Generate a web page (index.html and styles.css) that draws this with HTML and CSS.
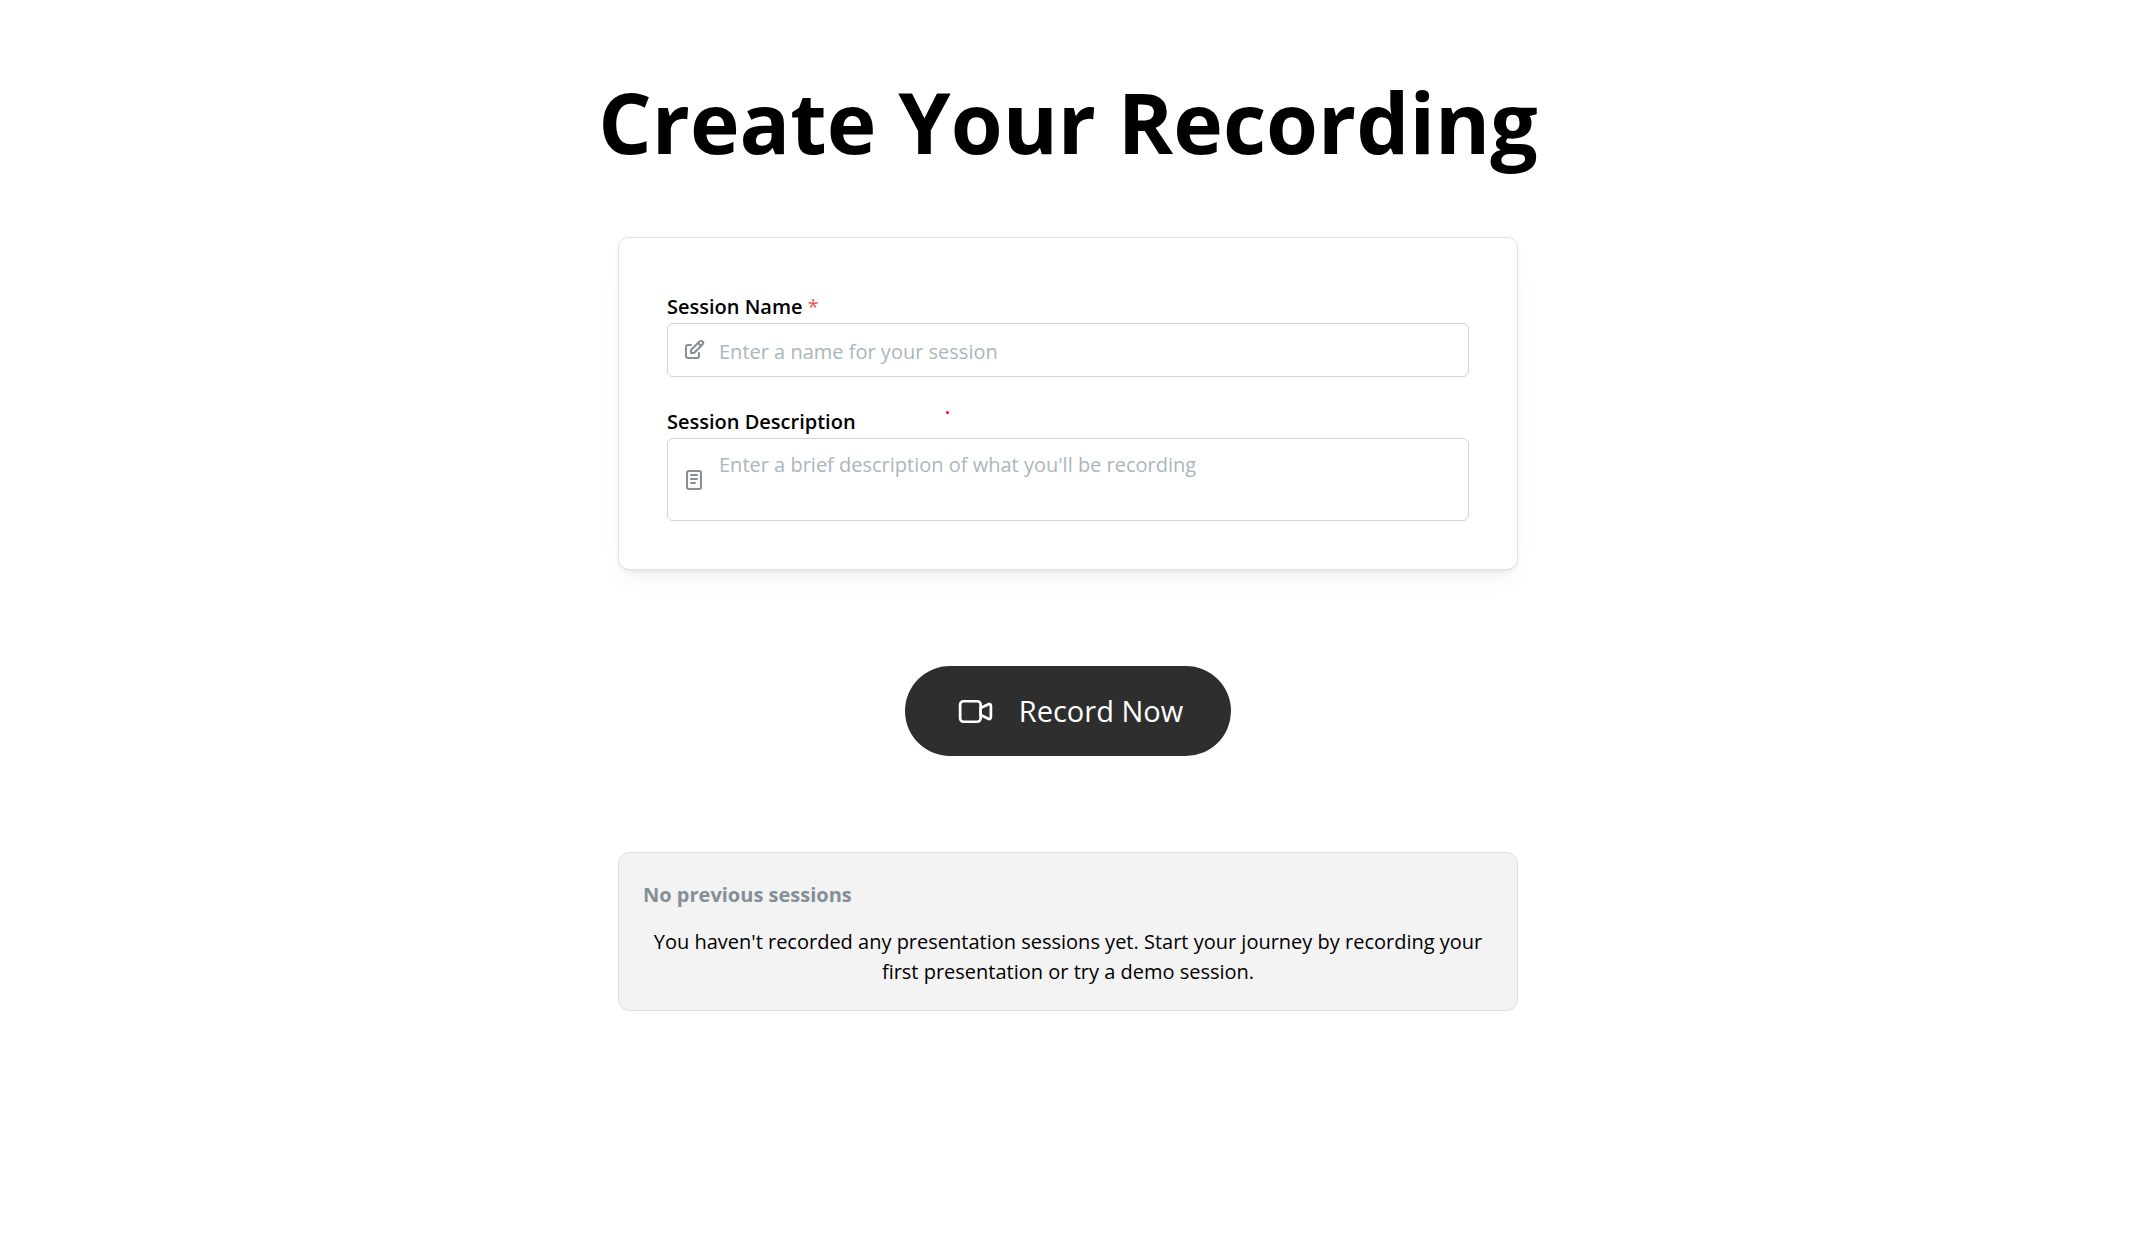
FILE: index.html
```html
<!DOCTYPE html>
<html lang="en">
<head>
  <meta charset="utf-8">
  <meta name="viewport" content="width=device-width, initial-scale=1">
  <title>Create Your Recording</title>
  <link rel="stylesheet" href="styles.css">
</head>
<body>
  <main class="page">
    <h1 class="page-title">Create Your Recording</h1>

    <form class="card" id="session-form">
      <div class="field">
        <label class="field-label" for="session-name">Session Name <span class="required">*</span></label>
        <div class="control">
          <svg class="control-icon" viewBox="0 0 24 24" aria-hidden="true">
            <path d="M9 7H6a2 2 0 0 0-2 2v9a2 2 0 0 0 2 2h9a2 2 0 0 0 2-2v-3"/>
            <path d="M9 15h3l8.5-8.5a1.5 1.5 0 0 0-3-3L9 12v3"/>
            <path d="M16 5l3 3"/>
          </svg>
          <input class="text-input" id="session-name" type="text" placeholder="Enter a name for your session">
        </div>
      </div>

      <div class="field">
        <label class="field-label" for="session-description">Session Description</label>
        <span class="marker" aria-hidden="true"></span>
        <div class="control">
          <svg class="control-icon" viewBox="0 0 24 24" aria-hidden="true">
            <rect x="5" y="3" width="14" height="18" rx="2"/>
            <path d="M9 7h6M9 11h6M9 15h4"/>
          </svg>
          <textarea class="text-input text-area" id="session-description" placeholder="Enter a brief description of what you'll be recording"></textarea>
        </div>
      </div>
    </form>

    <button class="record-button" type="submit" form="session-form">
      <svg class="record-icon" viewBox="0 0 24 24" aria-hidden="true">
        <path d="M15 10l4.553-2.276A1 1 0 0 1 21 8.618v6.764a1 1 0 0 1-1.447.894L15 14v-4z"/>
        <rect x="3" y="6" width="12" height="12" rx="2"/>
      </svg>
      Record Now
    </button>

    <section class="notice">
      <h2 class="notice-title">No previous sessions</h2>
      <p class="notice-text">You haven't recorded any presentation sessions yet. Start your journey by recording your first presentation or try a demo session.</p>
    </section>
  </main>
</body>
</html>
```
FILE: styles.css
```css
* {
  box-sizing: border-box;
}

body {
  margin: 0;
  background: #fff;
  color: #000;
  font-family: "Segoe UI", "Open Sans", "Noto Sans", sans-serif;
  font-size: 20px;
  line-height: 30px;
}

.page {
  display: flex;
  flex-direction: column;
  align-items: center;
  gap: 96px;
  padding: 65px 19px 96px 16px;
}

.page-title {
  margin: 0 0 -38px;
  font-size: 84px;
  font-weight: 700;
  line-height: 114px;
  text-align: center;
}

.card,
.notice {
  width: 100%;
  max-width: 900px;
  border: 1px solid #dee2e6;
  border-radius: 11px;
}

.card {
  display: flex;
  flex-direction: column;
  gap: 29px;
  padding: 53px 48px 48px;
  background: #fff;
  box-shadow: 0 1px 4px rgba(0, 0, 0, 0.05), 0 14px 27px -7px rgba(0, 0, 0, 0.05), 0 10px 10px -7px rgba(0, 0, 0, 0.04);
}

.field {
  position: relative;
}

.field-label {
  display: block;
  width: fit-content;
  font-weight: 600;
  line-height: 32px;
}

.required {
  color: #fa5252;
  font-weight: 400;
}

.marker {
  position: absolute;
  top: 5px;
  left: 279px;
  width: 3px;
  height: 3px;
  border-radius: 50%;
  background: #f01414;
}

.control {
  display: grid;
  align-items: center;
}

.control-icon {
  z-index: 1;
  grid-area: 1 / 1;
  width: 24px;
  height: 24px;
  margin-left: 15px;
  fill: none;
  stroke: #868e96;
  stroke-width: 2;
  stroke-linecap: round;
  stroke-linejoin: round;
  pointer-events: none;
}

.text-input {
  grid-area: 1 / 1;
  width: 100%;
  height: 54px;
  margin: 0;
  padding: 2px 16px 0 51px;
  border: 1px solid #ced4da;
  border-radius: 6px;
  background: #fff;
  color: #000;
  font: inherit;
}

.text-input::placeholder {
  color: #adb5bd;
  opacity: 1;
}

.text-area {
  height: 83px;
  padding: 11px 16px 11px 51px;
  resize: none;
}

.record-button {
  display: flex;
  align-items: center;
  gap: 23px;
  height: 90px;
  padding: 0 48px 0 50px;
  border: 0;
  border-radius: 45px;
  background: #2e2e2e;
  color: #fff;
  font: inherit;
  font-size: 29px;
  cursor: pointer;
}

.record-icon {
  width: 41px;
  height: 41px;
  fill: none;
  stroke: currentColor;
  stroke-width: 1.6;
  stroke-linecap: round;
  stroke-linejoin: round;
}

.notice {
  padding: 27px 24px 23px;
  background: #f3f3f3;
}

.notice-title {
  margin: 0 0 17px;
  color: #868e96;
  font-size: 20px;
  font-weight: 700;
  line-height: 30px;
}

.notice-text {
  margin: 0;
  text-align: center;
}
```
